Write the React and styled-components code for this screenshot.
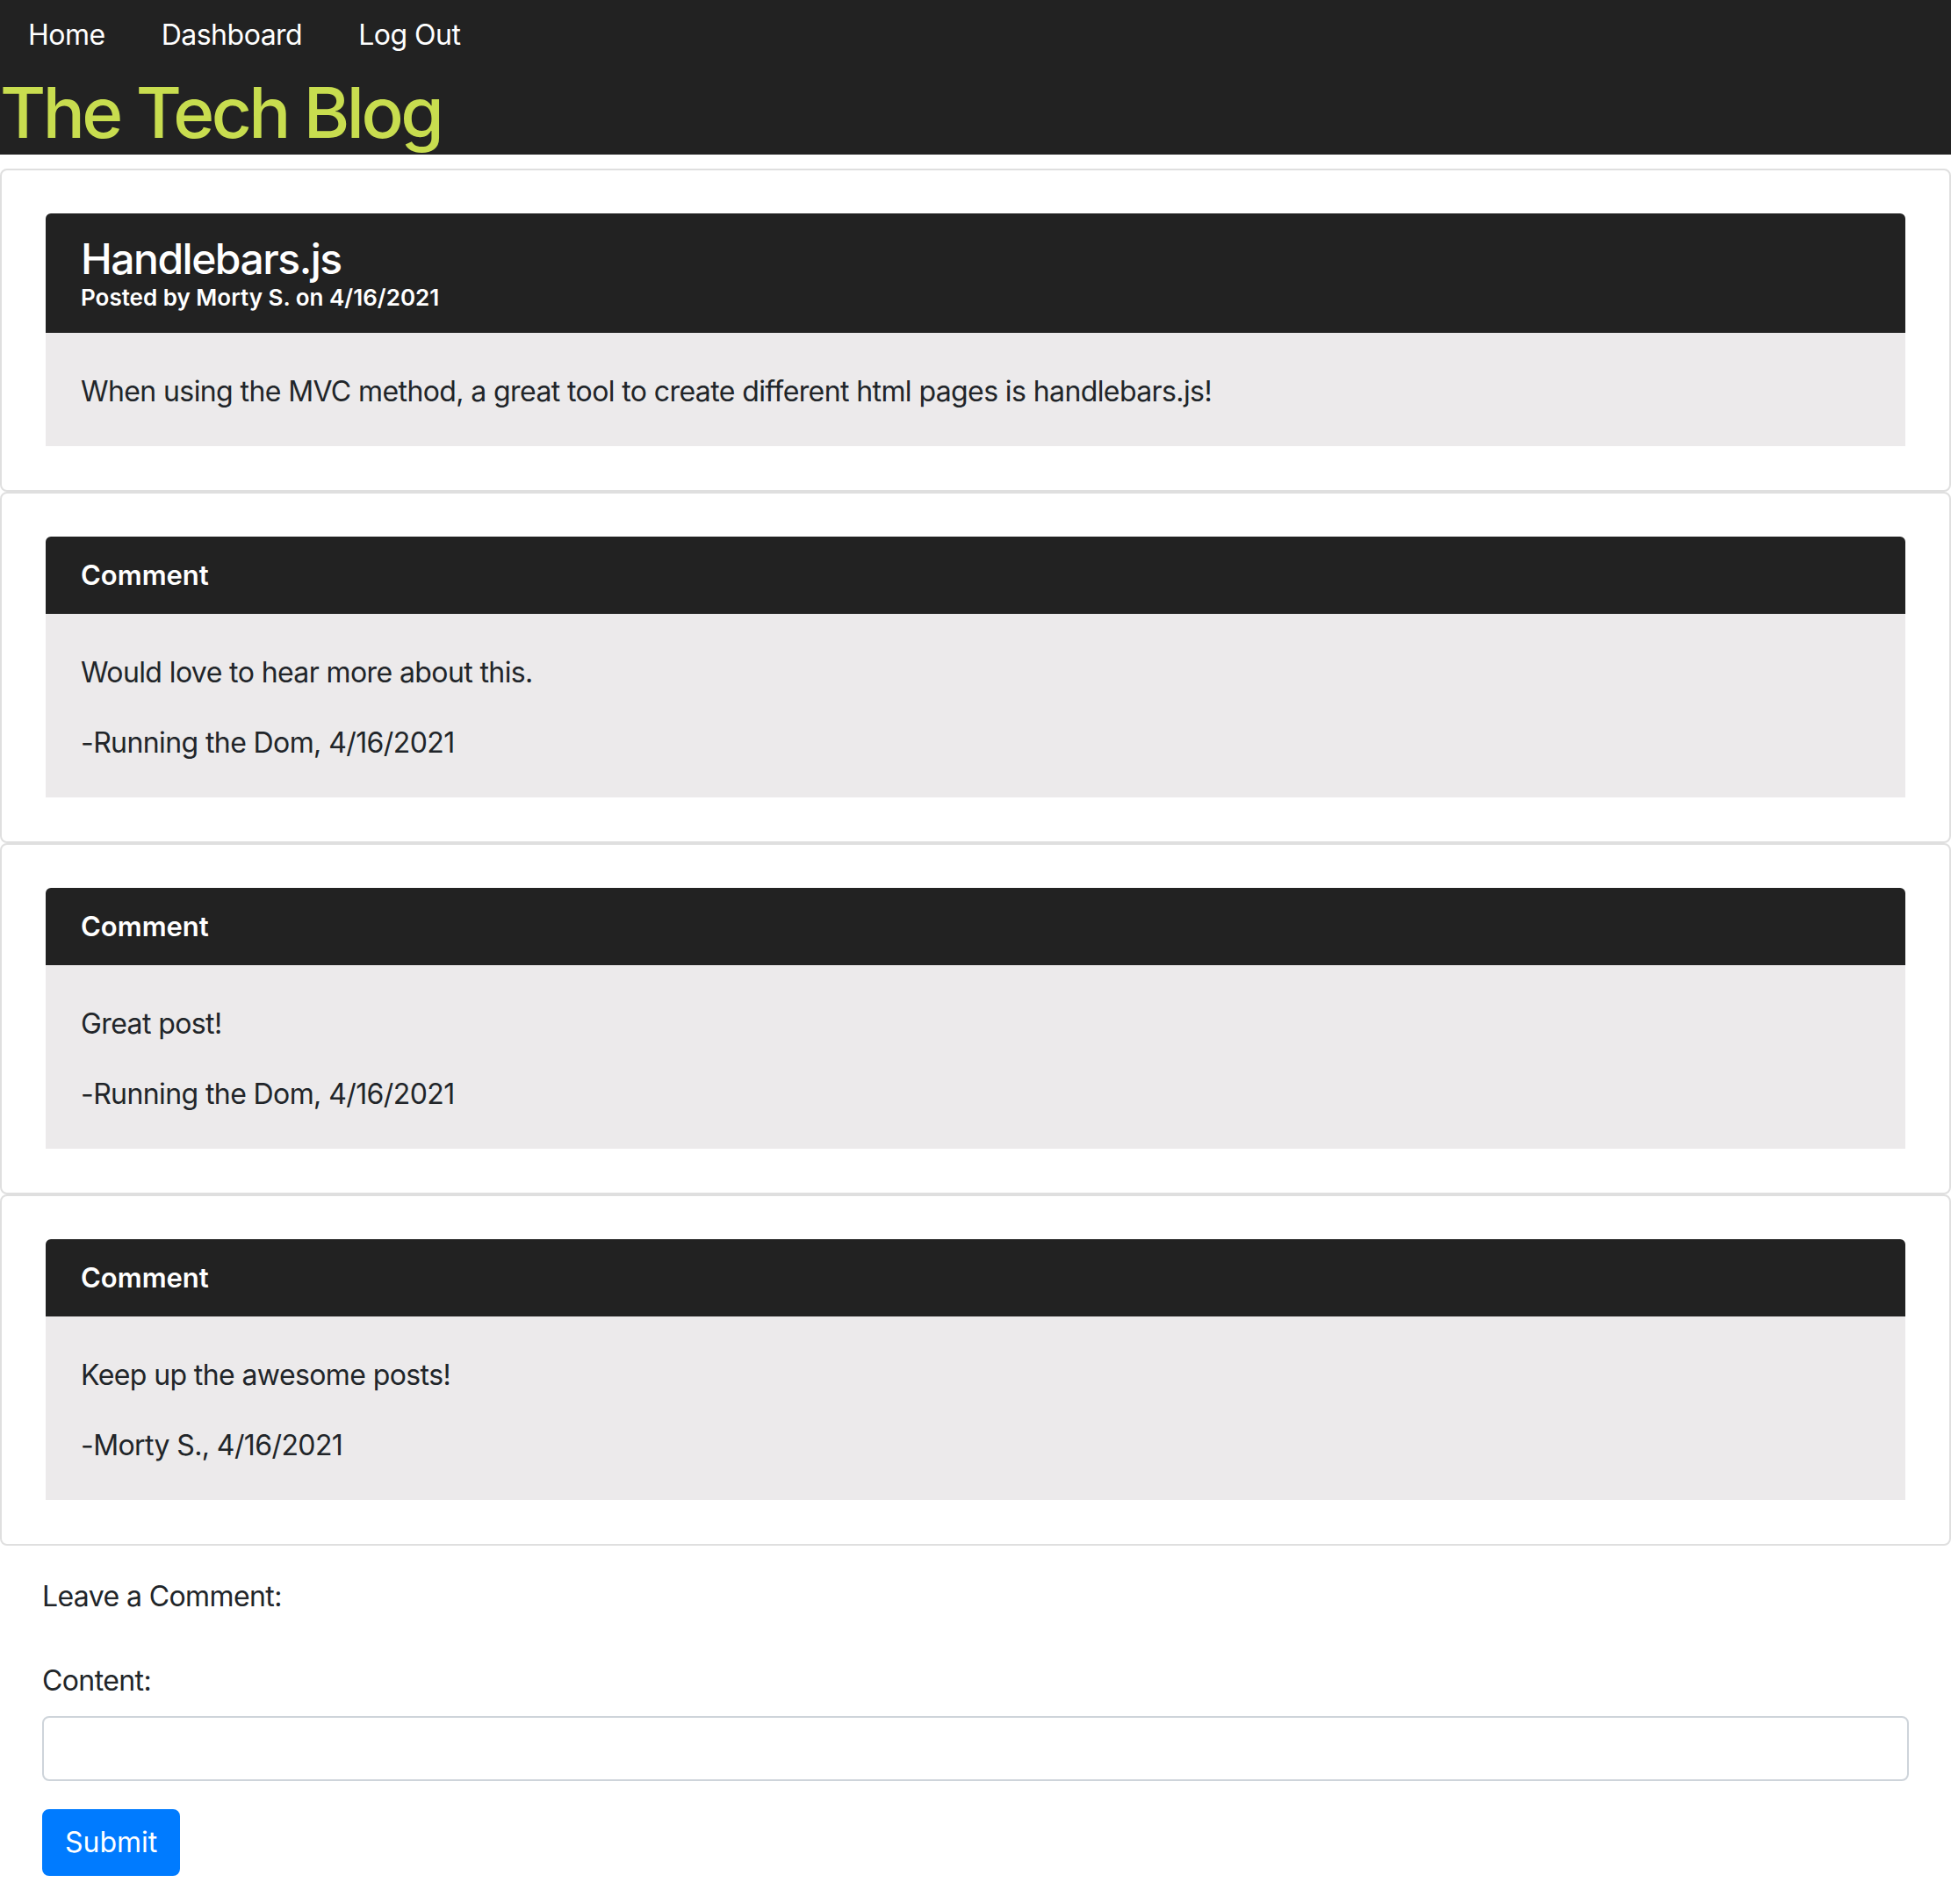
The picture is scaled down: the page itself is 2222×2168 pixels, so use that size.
import styled, { createGlobalStyle } from "styled-components";

const GlobalStyle = createGlobalStyle`
  * { box-sizing: border-box; }
  body {
    margin: 0;
    background: #fff;
    color: #212529;
    font-family: Inter, "Liberation Sans", sans-serif;
    font-size: 32px;
    line-height: 48px;
    letter-spacing: -0.6px;
  }
`;

// header
const Header = styled.header`
  background: #222;
`;

const Nav = styled.nav`
  display: flex;
  padding: 16px 0;
`;

const NavLink = styled.a`
  color: #fff;
  text-decoration: none;
  padding: 0 32px;
  font-size: 32px;
  line-height: 48px;
  letter-spacing: -0.5px;
`;

const Title = styled.h1`
  margin: 0;
  color: #c8dd4f;
  font-size: 80px;
  font-weight: 500;
  line-height: 96px;
  letter-spacing: -3.5px;
`;

// cards
const Outer = styled.section`
  border: 2px solid #dfdfdf;
  border-radius: 8px;
  padding: 49px 50px 50px;
  margin-top: ${(p) => (p.$first ? "16px" : "0")};
`;

const Inner = styled.article`
  border-radius: 6px 6px 0 0;
  overflow: hidden;
`;

const CardHead = styled.div`
  background: #222;
  color: #fff;
  padding: 24px 40px;
`;

const PostTitle = styled.h2`
  margin: 0;
  font-size: 48px;
  font-weight: 500;
  line-height: 56px;
  letter-spacing: -1.5px;
`;

const PostMeta = styled.div`
  font-size: 26px;
  font-weight: 600;
  line-height: 32px;
  letter-spacing: 0;
`;

const CommentLabel = styled.div`
  font-size: 31px;
  font-weight: 600;
  line-height: 40px;
  letter-spacing: 0;
`;

const CardBody = styled.div`
  background: #eceaeb;
  padding: 43px 40px 38px;

  p {
    margin: 0 0 32px;
  }
  p:last-child {
    margin-bottom: 0;
  }
`;

// form
const Form = styled.form`
  padding: 34px 48px 32px;
`;

const Lead = styled.p`
  margin: 0 0 48px;
`;

const Label = styled.label`
  display: block;
  margin-bottom: 16px;
`;

const Input = styled.input`
  display: block;
  width: 100%;
  height: 74px;
  border: 2px solid #ced4da;
  border-radius: 8px;
  padding: 12px 24px;
  font: inherit;
  margin-bottom: 32px;
`;

const Button = styled.button`
  background: #007bff;
  color: #fff;
  border: 2px solid #007bff;
  border-radius: 8px;
  padding: 12px 24px;
  font: inherit;
  line-height: 48px;
`;

const comments = [
  { text: "Would love to hear more about this.", by: "Running the Dom" },
  { text: "Great post!", by: "Running the Dom" },
  { text: "Keep up the awesome posts!", by: "Morty S." },
];

export default function App() {
  return (
    <>
      <GlobalStyle />
      <Header>
        <Nav>
          <NavLink href="#">Home</NavLink>
          <NavLink href="#">Dashboard</NavLink>
          <NavLink href="#">Log Out</NavLink>
        </Nav>
        <Title>The Tech Blog</Title>
      </Header>

      <Outer $first>
        <Inner>
          <CardHead>
            <PostTitle>Handlebars.js</PostTitle>
            <PostMeta>Posted by Morty S. on 4/16/2021</PostMeta>
          </CardHead>
          <CardBody>
            <p>
              When using the MVC method, a great tool to create different html
              pages is handlebars.js!
            </p>
          </CardBody>
        </Inner>
      </Outer>

      {comments.map((c, i) => (
        <Outer key={i}>
          <Inner>
            <CardHead>
              <CommentLabel>Comment</CommentLabel>
            </CardHead>
            <CardBody>
              <p>{c.text}</p>
              <p>-{c.by}, 4/16/2021</p>
            </CardBody>
          </Inner>
        </Outer>
      ))}

      <Form onSubmit={(e) => e.preventDefault()}>
        <Lead>Leave a Comment:</Lead>
        <Label htmlFor="content">Content:</Label>
        <Input id="content" type="text" />
        <Button type="submit">Submit</Button>
      </Form>
    </>
  );
}
